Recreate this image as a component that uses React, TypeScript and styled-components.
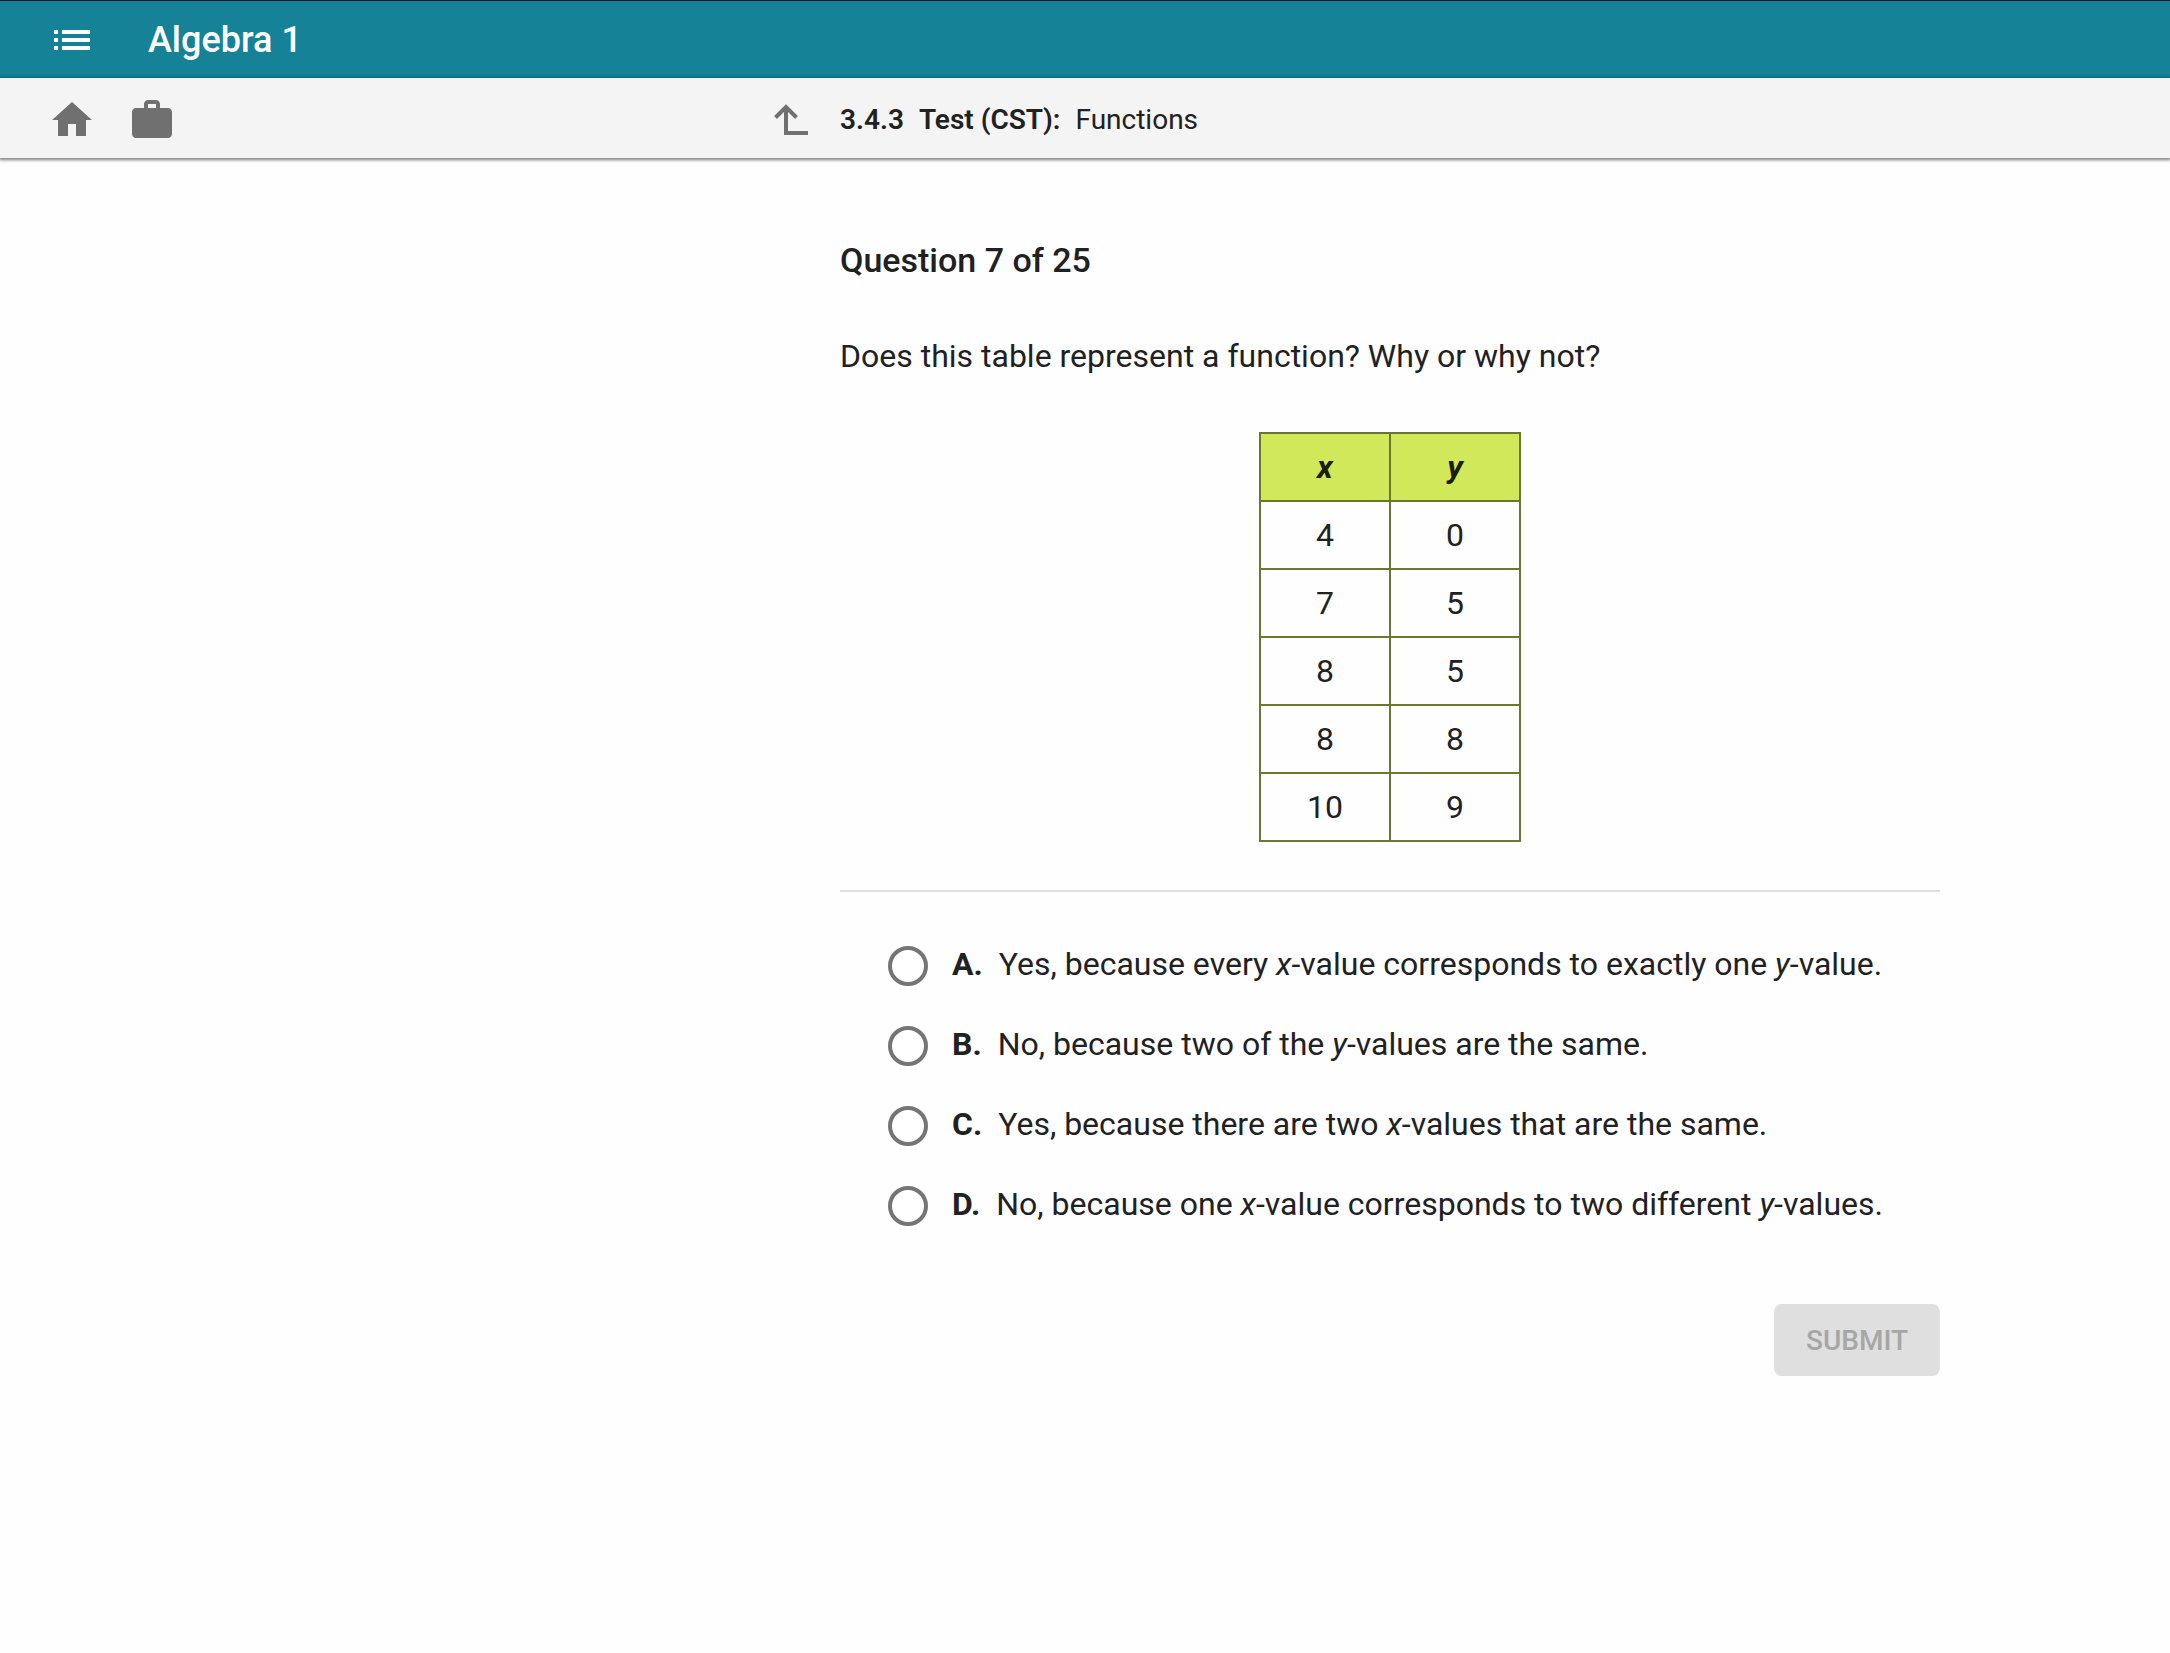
import React, { useState } from "react";
import styled, { createGlobalStyle } from "styled-components";

const GlobalStyle = createGlobalStyle`
  *, *::before, *::after { box-sizing: border-box; }
  body {
    margin: 0;
    background: #fefefe;
    color: #212121;
    font-family: Roboto, "Liberation Sans", sans-serif;
    font-size: 32px;
    line-height: 48px;
  }
`;

const TopBar = styled.header`
  display: flex;
  align-items: center;
  gap: 52px;
  height: 78px;
  padding: 0 48px;
  border-top: 1px solid #0b1a20;
  background: #158297;
  color: #ffffff;
`;

const CourseTitle = styled.h1`
  margin: 0;
  font-size: 36px;
  font-weight: 500;
`;

const IconButton = styled.button`
  display: flex;
  padding: 0;
  border: 0;
  background: none;
  color: inherit;
  cursor: pointer;
`;

const columns = "84fr 110fr 23fr";

const NavBar = styled.nav`
  display: grid;
  grid-template-columns: ${columns};
  align-items: center;
  height: 80px;
  padding-top: 4px;
  background: #f4f4f4;
  box-shadow: 0 1px 3px 1px rgba(0, 0, 0, 0.5);
`;

const NavIcons = styled.div`
  display: flex;
  align-items: center;
  gap: 32px;
  padding: 0 32px 0 48px;
`;

const NavLink = styled.a<{ $end?: boolean }>`
  display: flex;
  margin-left: ${(p) => (p.$end ? "auto" : "0")};
  color: #707070;
`;

const Crumb = styled.div`
  display: flex;
  gap: 15px;
  font-size: 28px;
`;

const CrumbStrong = styled.b`
  font-weight: 600;
`;

const Main = styled.main`
  display: grid;
  grid-template-columns: ${columns};
  padding-top: 78px;
`;

const Question = styled.form`
  grid-column: 2;
  display: flex;
  flex-direction: column;
`;

const QuestionTitle = styled.h2`
  margin: 0 0 48px;
  font-size: 34px;
  font-weight: 500;
`;

const Prompt = styled.p`
  margin: 0 0 52px;
`;

const DataTable = styled.table`
  align-self: center;
  border-collapse: collapse;
  text-align: center;

  th,
  td {
    width: 130px;
    height: 68px;
    padding: 0;
    border: 2px solid #697730;
  }

  th {
    background: #d1e85b;
    color: #1b1e0b;
    font-weight: 700;
    font-style: italic;
  }
`;

const Divider = styled.hr`
  width: 100%;
  height: 2px;
  margin: 48px 0 0;
  border: 0;
  background: #dedede;
`;

const Options = styled.fieldset`
  display: flex;
  flex-direction: column;
  gap: 32px;
  min-width: 0;
  margin: 48px 0 0;
  padding: 0 0 0 48px;
  border: 0;
`;

const Option = styled.label`
  display: flex;
  align-items: center;
  cursor: pointer;
`;

const Radio = styled.input`
  appearance: none;
  flex: none;
  width: 40px;
  height: 40px;
  margin: 4px 24px 0 0;
  border: 4px solid #757575;
  border-radius: 50%;
  background: #ffffff;

  &:checked {
    background: radial-gradient(#158297 50%, #ffffff 55%);
  }
`;

const Letter = styled.b`
  margin-right: 16px;
  font-weight: 700;
`;

const Submit = styled.button`
  align-self: flex-end;
  height: 72px;
  margin-top: 76px;
  padding: 0 32px;
  border: 0;
  border-radius: 8px;
  background: #dfdfdf;
  color: #a6a6a6;
  font-family: inherit;
  font-size: 28px;
  font-weight: 500;
`;

const Icon = ({ d }: { d: string }) => (
  <svg width="48" height="48" viewBox="0 0 24 24" fill="currentColor" aria-hidden="true">
    <path d={d} />
  </svg>
);

const LIST = "M3 13h2v-2H3v2zm0 4h2v-2H3v2zm0-8h2V7H3v2zm4 4h14v-2H7v2zm0 4h14v-2H7v2zM7 7v2h14V7H7z";
const HOME = "M10 20v-6h4v6h5v-8h3L12 3 2 12h3v8z";
const WORK =
  "M20 6h-4V4c0-1.11-.89-2-2-2h-4c-1.11 0-2 .89-2 2v2H4c-1.11 0-2 .89-2 2v11c0 1.11.89 2 2 2h16c1.11 0 2-.89 2-2V8c0-1.11-.89-2-2-2zm-6 0h-4V4h4v2z";

const UpIcon = () => (
  <svg width="34" height="32" viewBox="0 0 34 32" fill="none" stroke="currentColor" strokeWidth="4" aria-hidden="true">
    <path d="M1.5 13.5 12 3l10.500 10.500M12 3v26h22" />
  </svg>
);

const rows = [
  [4, 0],
  [7, 5],
  [8, 5],
  [8, 8],
  [10, 9],
];

const options = [
  { letter: "A", text: <>Yes, because every <i>x</i>-value corresponds to exactly one <i>y</i>-value.</> },
  { letter: "B", text: <>No, because two of the <i>y</i>-values are the same.</> },
  { letter: "C", text: <>Yes, because there are two <i>x</i>-values that are the same.</> },
  { letter: "D", text: <>No, because one <i>x</i>-value corresponds to two different <i>y</i>-values.</> },
];

export default function App() {
  const [choice, setChoice] = useState<string | null>(null);

  return (
    <>
      <GlobalStyle />
      <TopBar>
        <IconButton type="button" aria-label="Menu">
          <Icon d={LIST} />
        </IconButton>
        <CourseTitle>Algebra 1</CourseTitle>
      </TopBar>
      <NavBar>
        <NavIcons>
          <NavLink href="#home" aria-label="Home">
            <Icon d={HOME} />
          </NavLink>
          <NavLink href="#work" aria-label="Coursework">
            <Icon d={WORK} />
          </NavLink>
          <NavLink href="#up" aria-label="Up one level" $end>
            <UpIcon />
          </NavLink>
        </NavIcons>
        <Crumb>
          <CrumbStrong>3.4.3</CrumbStrong>
          <CrumbStrong>Test (CST):</CrumbStrong>
          <span>Functions</span>
        </Crumb>
      </NavBar>
      <Main>
        <Question onSubmit={(e) => e.preventDefault()}>
          <QuestionTitle>Question 7 of 25</QuestionTitle>
          <Prompt>Does this table represent a function? Why or why not?</Prompt>
          <DataTable>
            <thead>
              <tr>
                <th scope="col">x</th>
                <th scope="col">y</th>
              </tr>
            </thead>
            <tbody>
              {rows.map(([x, y], i) => (
                <tr key={i}>
                  <td>{x}</td>
                  <td>{y}</td>
                </tr>
              ))}
            </tbody>
          </DataTable>
          <Divider />
          <Options aria-label="Answer choices">
            {options.map(({ letter, text }) => (
              <Option key={letter}>
                <Radio
                  type="radio"
                  name="answer"
                  value={letter}
                  checked={choice === letter}
                  onChange={() => setChoice(letter)}
                />
                <Letter>{letter}.</Letter>
                <span>{text}</span>
              </Option>
            ))}
          </Options>
          <Submit type="submit" disabled={choice === null}>
            SUBMIT
          </Submit>
        </Question>
      </Main>
    </>
  );
}
